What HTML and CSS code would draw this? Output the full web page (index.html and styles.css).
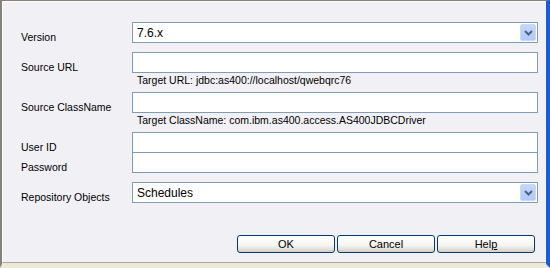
FILE: index.html
```html
<!DOCTYPE html>
<html lang="en">
<head>
    <meta charset="UTF-8">
    <title>Connection Settings</title>
    <link rel="stylesheet" href="styles.css">
</head>
<body>
    <div class="window">
        <div class="dialog">
            <div class="form">
                <!-- Version -->
                <div class="row">
                    <label class="label">Version</label>
                    <div class="field">
                        <div class="combo">
                            <span class="combo-value">7.6.x</span>
                            <span class="combo-button">
                                <svg width="9" height="6" viewBox="0 0 9 6"><path d="M1 1 L4.5 4.5 L8 1" fill="none" stroke="#4d6185" stroke-width="2"/></svg>
                            </span>
                        </div>
                    </div>
                </div>

                <!-- Source URL -->
                <div class="row hinted">
                    <label class="label">Source URL</label>
                    <div class="field">
                        <div class="textbox"></div>
                        <div class="hint">Target URL: jdbc:as400://localhost/qwebqrc76</div>
                    </div>
                </div>

                <!-- Source ClassName -->
                <div class="row hinted">
                    <label class="label">Source ClassName</label>
                    <div class="field">
                        <div class="textbox"></div>
                        <div class="hint">Target ClassName: com.ibm.as400.access.AS400JDBCDriver</div>
                    </div>
                </div>

                <!-- Credentials -->
                <div class="row">
                    <label class="label">User ID</label>
                    <div class="field">
                        <div class="textbox"></div>
                    </div>
                </div>
                <div class="row joined">
                    <label class="label">Password</label>
                    <div class="field">
                        <div class="textbox"></div>
                    </div>
                </div>

                <!-- Repository Objects -->
                <div class="row">
                    <label class="label">Repository Objects</label>
                    <div class="field">
                        <div class="combo">
                            <span class="combo-value">Schedules</span>
                            <span class="combo-button">
                                <svg width="9" height="6" viewBox="0 0 9 6"><path d="M1 1 L4.5 4.5 L8 1" fill="none" stroke="#4d6185" stroke-width="2"/></svg>
                            </span>
                        </div>
                    </div>
                </div>
            </div>

            <!-- Buttons -->
            <div class="buttons">
                <button class="btn">OK</button>
                <button class="btn">Cancel</button>
                <button class="btn">Hel<u>p</u></button>
            </div>
        </div>
    </div>
</body>
</html>
```

FILE: styles.css
```css
body {
    margin: 0;
    padding: 0;
    font-family: "Liberation Sans", Arial, sans-serif;
    font-size: 10.5px;
    color: #000;
    background-color: #ece9d8;
}

/* Window frame */
.window {
    width: 550px;
    height: 268px;
    box-sizing: border-box;
    border-left: 2px solid #858278;
    border-top: 1px solid #858278;
    border-right: 4px solid #1a5ae0;
    border-bottom: 4px solid #ece9d8;
    background-color: #ece9d8;
}

.dialog {
    height: 262px;
    box-sizing: border-box;
    border-left: 1px solid #ffffff;
    border-top: 1px solid #ffffff;
    border-right: 1px solid #f7f7f9;
    border-bottom: 1px solid #aca899;
    background-color: #f1f1f5;
    display: flex;
    flex-direction: column;
}

.form {
    display: flex;
    flex-direction: column;
    gap: 9px;
    padding: 20px 7px 0 18px;
}

.row {
    display: flex;
}

.row.joined {
    margin-top: -10px;
}

.label {
    width: 111px;
    flex-shrink: 0;
    line-height: 13px;
    align-self: flex-end;
    margin-bottom: -1px;
}

.row.hinted .label {
    align-self: flex-start;
    margin-top: 9px;
}

.field {
    flex: 1;
}

.textbox,
.combo {
    height: 21px;
    box-sizing: border-box;
    border: 1px solid #7f9db9;
    background-color: #fff;
}

.hint {
    line-height: 13px;
    margin-top: 1px;
    margin-bottom: -4px;
    padding-left: 5px;
}

/* Dropdowns */
.combo {
    display: flex;
    align-items: center;
    justify-content: space-between;
    padding: 0 1px 0 4px;
}

.combo-value {
    font-size: 12px;
}

.combo-button {
    width: 16px;
    height: 17px;
    box-sizing: border-box;
    border: 1px solid #c9d8fc;
    border-radius: 2px;
    background: linear-gradient(#c6d6fb, #b2c8f8);
    display: flex;
    align-items: center;
    justify-content: center;
}

.combo-button svg {
    display: block;
}

/* Button bar */
.buttons {
    display: flex;
    justify-content: flex-end;
    gap: 2px;
    padding: 32px 10px 0 0;
}

.btn {
    width: 98px;
    height: 18px;
    padding: 0;
    font-family: "Liberation Sans", Arial, sans-serif;
    font-size: 11px;
    color: #000;
    border: 1px solid #003c74;
    border-radius: 3px;
    background: linear-gradient(#ffffff, #f4f4f0 60%, #d6d0c5);
}
```
